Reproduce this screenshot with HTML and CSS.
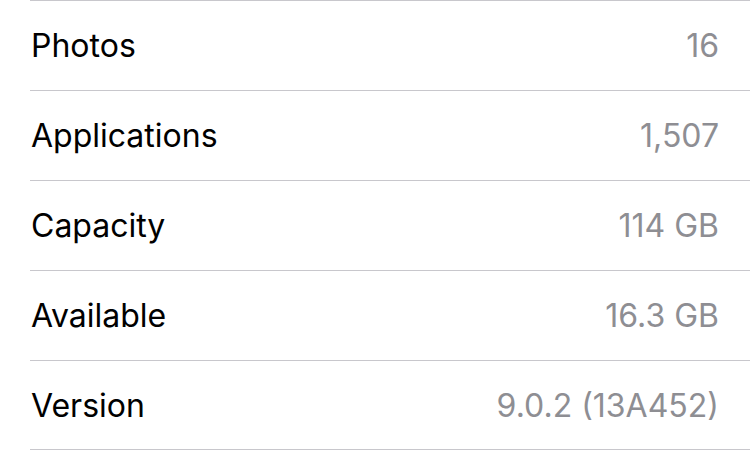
FILE: index.html
```html
<!DOCTYPE html>
<html lang="en">
<head>
    <meta charset="UTF-8" />
    <title>About</title>
    <link rel="stylesheet" href="styles.css">
</head>
<body>

    <!-- Lista de informações -->
    <ul class="info-list">
        <li class="info-row"><span class="label">Photos</span><span class="value">16</span></li>
        <li class="info-row"><span class="label">Applications</span><span class="value">1,507</span></li>
        <li class="info-row"><span class="label">Capacity</span><span class="value">114 GB</span></li>
        <li class="info-row"><span class="label">Available</span><span class="value">16.3 GB</span></li>
        <li class="info-row"><span class="label">Version</span><span class="value">9.0.2 (13A452)</span></li>
    </ul>

</body>
</html>
```

FILE: styles.css
```css
* {
    box-sizing: border-box;
}

body {
    font-family: Inter, 'Liberation Sans', sans-serif;
    background: #fff;
    margin: 0;
    color: #000;
}

.info-list {
    list-style: none;
    margin: 0;
    padding: 0 0 0 30px;
}

.info-row {
    display: flex;
    justify-content: space-between;
    align-items: center;
    height: 90px;
    padding: 0 31px 0 1px;
    border-top: 1px solid #c8c7cc;
    font-size: 32px;
}

.info-row:last-child {
    border-bottom: 1px solid #c8c7cc;
}

.value {
    color: #8e8e93;
}
```
